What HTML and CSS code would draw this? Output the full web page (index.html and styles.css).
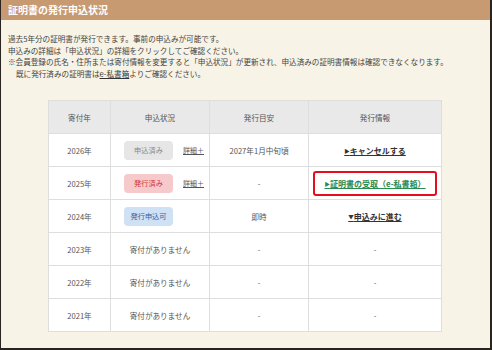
FILE: index.html
```html
<!DOCTYPE html>
<html lang="ja">
    <head>
        <meta charset="UTF-8">
        <meta name="viewport" content="width=device-width, initial-scale=1.0">
        <title>証明書の発行申込状況</title>
        <link rel="stylesheet" href="styles.css">
    </head>
    <body>
        <div id="panel">
            <h2 class="panel-title">証明書の発行申込状況</h2>

            <div class="notes">
                <p>過去5年分の証明書が発行できます。事前の申込みが可能です。</p>
                <p>申込みの詳細は「申込状況」の詳細をクリックしてご確認ください。</p>
                <p>※会員登録の氏名・住所または寄付情報を変更すると「申込状況」が更新され、申込済みの証明書情報は確認できなくなります。</p>
                <p class="indent">既に発行済みの証明書は<a href="#">e-私書箱</a>よりご確認ください。</p>
            </div>

            <table class="status-table">
                <thead>
                    <tr>
                        <th class="col-year">寄付年</th>
                        <th class="col-status">申込状況</th>
                        <th class="col-date">発行目安</th>
                        <th class="col-info">発行情報</th>
                    </tr>
                </thead>
                <tbody>
                    <tr>
                        <td>2026年</td>
                        <td>
                            <div class="status-cell">
                                <span class="badge badge-applied">申込済み</span>
                                <a href="#" class="detail-link">詳細＋</a>
                            </div>
                        </td>
                        <td>2027年1月中旬頃</td>
                        <td><a href="#" class="action-link"><span class="arrow">▶</span>キャンセルする</a></td>
                    </tr>
                    <tr>
                        <td>2025年</td>
                        <td>
                            <div class="status-cell">
                                <span class="badge badge-issued">発行済み</span>
                                <a href="#" class="detail-link">詳細＋</a>
                            </div>
                        </td>
                        <td>-</td>
                        <td>
                            <span class="highlight-box"><a href="#" class="action-link green"><span class="arrow">▶</span>証明書の受取（e-私書箱）</a></span>
                        </td>
                    </tr>
                    <tr>
                        <td>2024年</td>
                        <td>
                            <div class="status-cell">
                                <span class="badge badge-open">発行申込可</span>
                            </div>
                        </td>
                        <td>即時</td>
                        <td><a href="#" class="action-link"><span class="arrow">▼</span>申込みに進む</a></td>
                    </tr>
                    <tr>
                        <td>2023年</td>
                        <td>寄付がありません</td>
                        <td>-</td>
                        <td>-</td>
                    </tr>
                    <tr>
                        <td>2022年</td>
                        <td>寄付がありません</td>
                        <td>-</td>
                        <td>-</td>
                    </tr>
                    <tr>
                        <td>2021年</td>
                        <td>寄付がありません</td>
                        <td>-</td>
                        <td>-</td>
                    </tr>
                </tbody>
            </table>
        </div>
    </body>
</html>
```

FILE: styles.css
```css
html, body {
    margin: 0;
    height: 100%;
}

body {
    background-color: #f7f3e6;
    font-family: "Noto Sans CJK JP", "Noto Sans", sans-serif;
    color: #444;
}

#panel {
    box-sizing: border-box;
    height: 350px;
    border-left: 1px solid #2a2420;
    border-right: 2px solid #2a2420;
    border-bottom: 2px solid #2a2420;
    background-color: #f7f3e6;
}

.panel-title {
    margin: 0;
    height: 20px;
    line-height: 20px;
    padding-left: 7px;
    background-color: #c79a72;
    color: #fff;
    font-size: 10px;
    font-weight: bold;
}

.notes {
    padding: 13px 7px 0 7px;
    font-size: 7.6px;
    line-height: 11.6px;
    color: #444;
}

.notes p {
    margin: 0;
    white-space: nowrap;
}

.notes .indent {
    padding-left: 8px;
}

.notes a {
    color: #333;
    text-decoration: underline;
}

.status-table {
    margin: 21px 0 0 47px;
    width: 394px;
    border-collapse: collapse;
    background-color: #fff;
    font-size: 7.6px;
    color: #555;
    table-layout: fixed;
}

.status-table th,
.status-table td {
    border: 1px solid #dedede;
    text-align: center;
    padding: 0;
    height: 32px;
}

.status-table th {
    background-color: #e9e9e9;
    font-weight: normal;
    color: #555;
}

.col-year {
    width: 61px;
}

.col-status {
    width: 98px;
}

.col-date {
    width: 98px;
}

.status-cell {
    display: flex;
    align-items: center;
    padding-left: 13px;
    gap: 10px;
}

.badge {
    display: inline-block;
    width: 49px;
    height: 19px;
    line-height: 19px;
    border-radius: 4px;
    font-size: 7.2px;
    text-align: center;
}

.badge-applied {
    background-color: #e6e6e6;
    color: #888;
}

.badge-issued {
    background-color: #f6c9cb;
    color: #d2323c;
}

.badge-open {
    background-color: #cfe1f4;
    color: #2d64aa;
}

.detail-link {
    color: #555;
    font-size: 7px;
    text-decoration: underline;
}

.action-link {
    color: #333;
    font-weight: bold;
    font-size: 8px;
    text-decoration: underline;
}

.action-link .arrow {
    font-size: 5.5px;
    vertical-align: 1px;
}

.action-link.green {
    color: #2a8a4e;
}

.highlight-box {
    display: inline-block;
    padding: 5px 9px;
    border: 2px solid #e3101c;
    border-radius: 3px;
}
```
